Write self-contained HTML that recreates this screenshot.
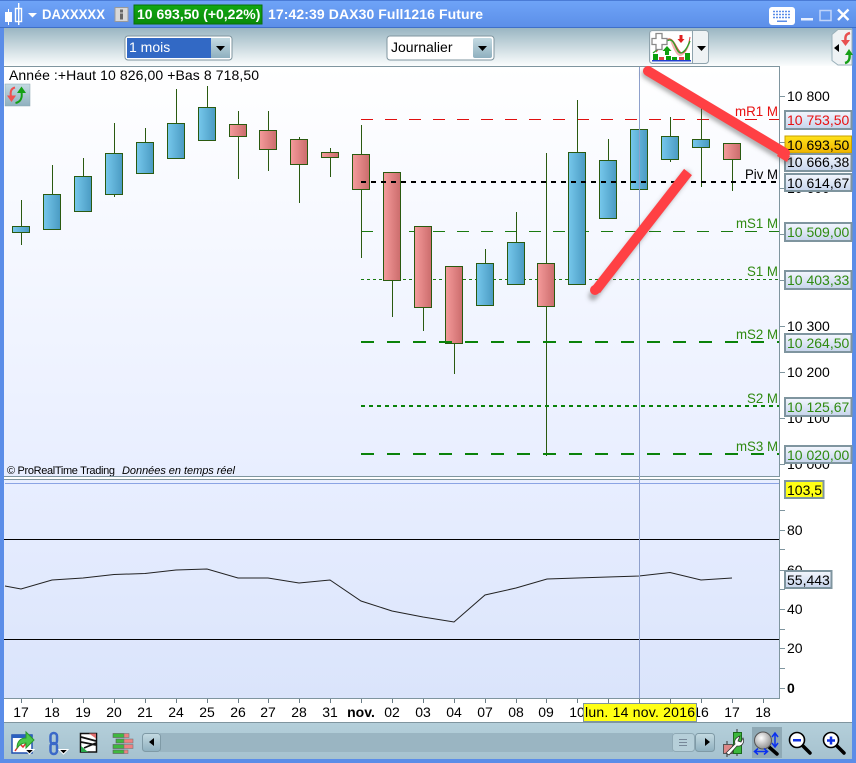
<!DOCTYPE html>
<html><head><meta charset="utf-8"><style>
html,body{margin:0;padding:0;background:#fff;width:856px;height:763px;overflow:hidden}
svg{display:block}
text{font-family:"Liberation Sans",sans-serif;font-size:14px;white-space:pre}
.b{fill:#000}.w{fill:#fff;font-weight:bold}
.c{stroke:#2a5a10;stroke-width:1;shape-rendering:crispEdges}
.l{fill:url(#lab);stroke:#7f959f;stroke-width:2}
.g{fill:#2f8a10}
</style></head><body>
<svg width="856" height="763" viewBox="0 0 856 763" xmlns="http://www.w3.org/2000/svg">
<defs>
<linearGradient id="tb" x1="0" y1="0" x2="0" y2="1"><stop offset="0" stop-color="#6fa4f8"/><stop offset="1" stop-color="#5c8fe8"/></linearGradient>
<linearGradient id="tool" x1="0" y1="0" x2="0" y2="1"><stop offset="0" stop-color="#9ab6c2"/><stop offset="1" stop-color="#fbfdfd"/></linearGradient>
<linearGradient id="bot" x1="0" y1="0" x2="0" y2="1"><stop offset="0" stop-color="#b4cfda"/><stop offset="1" stop-color="#a6c2cf"/></linearGradient>
<linearGradient id="main" x1="0" y1="0" x2="0" y2="1"><stop offset="0" stop-color="#fff"/><stop offset="1" stop-color="#e8eeff"/></linearGradient>
<linearGradient id="pane" x1="0" y1="0" x2="0" y2="1"><stop offset="0" stop-color="#e8eeff"/><stop offset="1" stop-color="#dae4fb"/></linearGradient>
<linearGradient id="up" x1="0" y1="0" x2="1" y2="0"><stop offset="0" stop-color="#76c8ec"/><stop offset="1" stop-color="#4a9ac2"/></linearGradient>
<linearGradient id="dn" x1="0" y1="0" x2="1" y2="0"><stop offset="0" stop-color="#f59b9b"/><stop offset="1" stop-color="#cb6c6c"/></linearGradient>
<linearGradient id="lab" x1="0" y1="0" x2="0" y2="1"><stop offset="0" stop-color="#f4f7fe"/><stop offset="1" stop-color="#c6d4ec"/></linearGradient>
<linearGradient id="btn" x1="0" y1="0" x2="0" y2="1"><stop offset="0" stop-color="#c4dae2"/><stop offset="1" stop-color="#8fb0bf"/></linearGradient>
<linearGradient id="gold" x1="0" y1="0" x2="0" y2="1"><stop offset="0" stop-color="#ffe21a"/><stop offset="1" stop-color="#f0b400"/></linearGradient>
<linearGradient id="grn" x1="0" y1="0" x2="0" y2="1"><stop offset="0" stop-color="#12a812"/><stop offset="1" stop-color="#0a8a0a"/></linearGradient>
<radialGradient id="lens" cx=".4" cy=".35" r=".7"><stop offset="0" stop-color="#fff"/><stop offset="1" stop-color="#8a8a8a"/></radialGradient>
<filter id="sh" x="-20%" y="-20%" width="140%" height="140%"><feGaussianBlur stdDeviation="2"/></filter>
</defs>

<!-- window frame -->
<rect width="856" height="763" fill="#5b8de8"/>
<rect width="856" height="27" fill="url(#tb)"/>
<rect y="0" width="856" height="1" fill="#4a7bd6"/>
<rect y="27" width="856" height="1" fill="#3f70c8"/>
<rect x="4" y="28" width="848" height="38" fill="url(#tool)"/>
<rect x="4" y="66" width="848" height="656" fill="#fff"/>
<rect x="4" y="723" width="848" height="36" fill="url(#bot)"/>
<rect x="4" y="722" width="848" height="1" fill="#7f959f"/>

<!-- title bar -->
<g fill="#fff">
<rect x="5" y="12" width="7" height="10"/><rect x="8" y="9" width="1" height="16"/>
<rect x="15.500" y="8.500" width="6" height="13" fill="none" stroke="#fff" stroke-width="1.400"/><rect x="18" y="3" width="1.400" height="22"/>
<path d="M28 13h9l-4.500 4.500z"/>
</g>
<text x="42" y="19" class="w" textLength="63" lengthAdjust="spacingAndGlyphs">DAXXXXX</text>
<rect x="115" y="7.500" width="13" height="14" fill="#d8d8d8" stroke="#9a9a9a"/>
<rect x="120" y="9.500" width="3" height="3" fill="#666"/><rect x="120" y="13.500" width="3" height="6" fill="#666"/>
<rect x="134" y="5" width="128" height="19" fill="url(#grn)" stroke="#0a6f0a"/>
<text x="137" y="19" class="w">10 693,50 (+0,22%)</text>
<text x="268" y="19" class="w" textLength="215">17:42:39 DAX30 Full1216 Future</text>
<rect x="769" y="7" width="26" height="18" rx="3" fill="#fff"/>
<g stroke="#5b8de8" stroke-width="1.500" stroke-dasharray="2 1" fill="none"><path d="M773 11.500h18M773 14.500h18M773 17.500h18"/></g>
<rect x="777" y="20.500" width="10" height="1.500" fill="#5b8de8"/>
<g stroke="#fff" fill="none">
<rect x="801" y="18" width="12" height="2.500" fill="#e8f0ff" stroke="none"/>
<rect x="820" y="10.500" width="11" height="10" stroke="#c0d4fa" stroke-width="1.500"/>
<path d="M838 9.500l10.500 10.500M848.500 9.500l-10.500 10.500" stroke-width="2.400"/>
</g>

<!-- dropdowns -->
<rect x="125" y="36" width="107" height="24" rx="3" fill="#fff" stroke="#7f959f"/>
<rect x="127" y="38" width="84" height="20" fill="#3269c5"/>
<text x="129" y="52" fill="#fff">1 mois</text>
<rect x="211" y="38" width="19" height="20" fill="url(#btn)"/>
<path d="M216 46h9l-4.500 5z"/>
<rect x="387" y="36" width="107" height="24" rx="3" fill="#fff" stroke="#7f959f"/>
<text x="391" y="52" fill="#000">Journalier</text>
<rect x="473" y="38" width="19" height="20" rx="2" fill="url(#btn)"/>
<path d="M478 46h9l-4.500 5z"/>

<!-- indicators button -->
<rect x="649.500" y="30.500" width="59" height="33" rx="3" fill="#eef2f4" stroke="#8fa3ad"/>
<rect x="651" y="32" width="41" height="30" rx="2" fill="#fff"/>
<line x1="692.500" y1="31" x2="692.500" y2="63" stroke="#8fa3ad"/>
<path d="M697 46h9l-4.500 5z"/>
<path d="M670 40C676 41 678 54 682 53C686 52 689 44 690 37V43C688 50 684 56 680 56C676 56 672 46 670 40z" fill="#f2b0b0"/>
<path d="M656 52C660 48 666 38 670 39C675 40 678 53 682 53C686 53 689 44 690 37" fill="none" stroke="#d84848" stroke-width="1"/>
<path d="M653 53C660 48 665 40 670 40C675 40 676 53 681 53C685 52 688 46 690 41" fill="none" stroke="#28a428" stroke-width="1.300"/>
<path d="M656 33.500h6v5h5v6h-5v5h-6v-5h-4v-6h4z" fill="#fff" stroke="#8a8a8a" stroke-width="1.300"/>
<path d="M665 55v-4h-2.500l4.500-5l4.500 5h-2.500v4z" fill="#12a012"/>
<path d="M679.500 35h3v4h2l-3.500 4l-3.500-4h2z" fill="#e02020"/>
<g fill="#0ca00c"><rect x="653" y="54" width="5" height="6"/><rect x="666" y="56" width="5" height="4"/><rect x="672" y="57" width="5" height="3"/><rect x="685" y="53" width="5" height="7"/></g>
<g fill="#e04848"><rect x="659" y="57" width="5" height="3"/><rect x="679" y="57" width="5" height="3"/></g>
<rect x="652" y="60" width="39" height="1.500" fill="#2040d0"/>

<!-- side icon -->
<path d="M852 29.500h-14l-6 5v26l6 4.500h14z" fill="#eef2f4" stroke="#9ab0ba"/>
<path d="M834 48l5-4v8z"/>
<path d="M850 33c-4 1-5 3-4.500 8" fill="none" stroke="#e85050" stroke-width="2.500"/>
<path d="M841 40h9l-4.500 6z" fill="#e85050"/>
<path d="M845 63c4-1 5-4 4.500-9" fill="none" stroke="#18a018" stroke-width="2.500"/>
<path d="M845 55h8l-4-6z" fill="#18a018"/>

<!-- main chart -->
<rect x="4" y="66" width="775" height="410" fill="url(#main)"/>
<text x="9" y="80" fill="#000" textLength="250">Année :+Haut 10 826,00 +Bas 8 718,50</text>
<rect x="5" y="84" width="25" height="22" fill="url(#btn)" stroke="#8aa4b0" stroke-width=".5"/>
<path d="M15 87.500c-4 1-5 4-4 9" fill="none" stroke="#f05050" stroke-width="2"/>
<path d="M7 95.500h9l-4.500 6.500z" fill="#f05050"/>
<path d="M21.500 92c1 6-1 10-6 11" fill="none" stroke="#14a014" stroke-width="2"/>
<path d="M17 93h9l-4.500-6.500z" fill="#14a014"/>

<!-- level lines -->
<g fill="none">
<line x1="361" y1="119.500" x2="779" y2="119.500" stroke="#e01010" stroke-dasharray="12 12"/>
<line x1="361" y1="231.500" x2="779" y2="231.500" stroke="#1a7a10" stroke-dasharray="12 12"/>
<line x1="361" y1="279.500" x2="779" y2="279.500" stroke="#1a7a10" stroke-dasharray="3 3"/>
</g>

<!-- wicks -->
<g class="c">
<path d="M21.500 200V245M52.500 165V194M83.500 158V176M114.500 123V197M145.500 128V142M176.500 89V123M207.500 86V107M238.500 111V179M268.500 111V171M299.500 137V203M330.500 148V177M361.500 125V258M392.500 172V317M423.500 226V331M454.500 266V374M485.500 249V263M516.500 212V242M546.500 153V456M577.500 100V152M608.500 139V160M639.500 98V129M670.500 117V162M701.500 108V187M732.500 143V191"/>
</g>
<!-- bodies -->
<g class="c" fill="url(#up)">
<rect x="12.500" y="226.500" width="17" height="6"/>
<rect x="43.500" y="194.500" width="17" height="35"/>
<rect x="74.500" y="176.500" width="17" height="35"/>
<rect x="105.500" y="153.500" width="17" height="41"/>
<rect x="136.500" y="142.500" width="17" height="31"/>
<rect x="167.500" y="123.500" width="17" height="35"/>
<rect x="198.500" y="107.500" width="17" height="33"/>
<rect x="476.500" y="263.500" width="17" height="42"/>
<rect x="507.500" y="242.500" width="17" height="42"/>
<rect x="568.500" y="152.500" width="17" height="132"/>
<rect x="599.500" y="160.500" width="17" height="58"/>
<rect x="630.500" y="129.500" width="17" height="60"/>
<rect x="661.500" y="136.500" width="17" height="23"/>
<rect x="692.500" y="139.500" width="17" height="8"/>
</g>
<g class="c" fill="url(#dn)">
<rect x="229.500" y="124.500" width="17" height="12"/>
<rect x="259.500" y="130.500" width="17" height="19"/>
<rect x="290.500" y="139.500" width="17" height="25"/>
<rect x="321.500" y="152.500" width="17" height="5"/>
<rect x="352.500" y="154.500" width="17" height="35"/>
<rect x="383.500" y="172.500" width="17" height="108"/>
<rect x="414.500" y="226.500" width="17" height="81"/>
<rect x="445.500" y="266.500" width="17" height="77"/>
<rect x="537.500" y="263.500" width="17" height="43"/>
<rect x="723.500" y="143.500" width="17" height="16"/>
</g>

<!-- thick levels on top -->
<g fill="none">
<line x1="361" y1="182" x2="779" y2="182" stroke="#000" stroke-width="2" stroke-dasharray="5 5"/>
<line x1="361" y1="342" x2="779" y2="342" stroke="#0a820a" stroke-width="2" stroke-dasharray="13 13"/>
<line x1="361" y1="406" x2="779" y2="406" stroke="#0a820a" stroke-width="2" stroke-dasharray="4 4"/>
<line x1="361" y1="454" x2="779" y2="454" stroke="#0a820a" stroke-width="2" stroke-dasharray="13 13"/>
</g>
<text x="735" y="116" fill="#e81010" textLength="43" lengthAdjust="spacingAndGlyphs">mR1 M</text>
<text x="745" y="179" fill="#000" textLength="33" lengthAdjust="spacingAndGlyphs">Piv M</text>
<text x="736" y="228" class="g" textLength="42" lengthAdjust="spacingAndGlyphs">mS1 M</text>
<text x="747" y="276" class="g" textLength="31" lengthAdjust="spacingAndGlyphs">S1 M</text>
<text x="736" y="339" class="g" textLength="42" lengthAdjust="spacingAndGlyphs">mS2 M</text>
<text x="747" y="403" class="g" textLength="31" lengthAdjust="spacingAndGlyphs">S2 M</text>
<text x="736" y="451" class="g" textLength="42" lengthAdjust="spacingAndGlyphs">mS3 M</text>
<text x="7" y="474" style="font-size:11px" fill="#000" textLength="108">© ProRealTime Trading</text>
<text x="122" y="474" style="font-size:11px;font-style:italic" fill="#000" textLength="113">Données en temps réel</text>

<!-- lower pane -->
<rect x="4" y="480" width="775" height="218" fill="url(#pane)"/>
<rect x="4" y="476" width="775" height="1" fill="#7f959f"/>
<rect x="4" y="479" width="775" height="1" fill="#7f959f"/>
<rect x="5" y="483" width="774" height="1" fill="#8ba4e4"/>
<rect x="4" y="539" width="775" height="1" fill="#000"/>
<rect x="4" y="639" width="775" height="1" fill="#000"/>
<polyline fill="none" stroke="#222" stroke-width="1" points="5,586 21,589 52,580 83,578 114,574.500 145,573.500 176,570 207,569 238,578 268,578 299,583 330,580 361,601 392,611 423,617 454,622 485,595 516,588 547,579 577,578 608,577 639,576 670,572.500 701,580 732,578"/>

<!-- crosshair -->
<line x1="639.500" y1="66" x2="639.500" y2="698" stroke="#8ea0cc"/>

<!-- axis frame -->
<g fill="#7f959f">
<rect x="4" y="66" width="775" height="1"/>
<rect x="779" y="66" width="1" height="411"/>
<rect x="779" y="479" width="1" height="220"/>
<rect x="4" y="698" width="775" height="1"/>
</g>

<!-- price axis ticks & labels -->
<g stroke="#7f959f" shape-rendering="crispEdges">
<path d="M780 96.500h5M780 142.500h5M780 188.500h5M780 234.500h5M780 280.500h5M780 326.500h5M780 372.500h5M780 418.500h5M780 464.500h5M780 510.500h5M780 530.500h5M780 549.500h5M780 570.500h5M780 589.500h5M780 609.500h5M780 629.500h5M780 648.500h5M780 668.500h5M780 688.500h5"/>
</g>
<text x="787" y="101" fill="#000">10 800</text>
<text x="787" y="193" fill="#000">10 600</text>
<text x="787" y="331" fill="#000">10 300</text>
<text x="787" y="377" fill="#000">10 200</text>
<text x="787" y="423" fill="#000">10 100</text>
<text x="787" y="469" fill="#000">10 000</text>
<text x="787" y="535" fill="#000">80</text>
<text x="787" y="575" fill="#000">60</text>
<text x="787" y="614" fill="#000">40</text>
<text x="787" y="653" fill="#000">20</text>
<text x="787" y="693" fill="#000" style="font-weight:bold">0</text>

<rect class="l" x="785" y="111" width="66.500" height="18"/><text x="787" y="125" fill="#e81010">10 753,50</text>
<rect x="785" y="136" width="66.500" height="17" fill="url(#gold)" stroke="#c8a000" stroke-width="1"/><text x="787" y="150" fill="#000">10 693,50</text>
<rect class="l" x="785" y="154" width="66.500" height="17"/><text x="787" y="167" fill="#000">10 666,38</text>
<rect class="l" x="785" y="174" width="66.500" height="17"/><text x="787" y="188" fill="#000">10 614,67</text>
<rect class="l" x="785" y="223" width="66.500" height="18"/><text x="787" y="237" class="g">10 509,00</text>
<rect class="l" x="785" y="271" width="66.500" height="18"/><text x="787" y="285" class="g">10 403,33</text>
<rect class="l" x="785" y="334" width="66.500" height="18"/><text x="787" y="348" class="g">10 264,50</text>
<rect class="l" x="785" y="398" width="66.500" height="18"/><text x="787" y="412" class="g">10 125,67</text>
<rect class="l" x="785" y="446" width="66.500" height="17"/><text x="787" y="460" class="g">10 020,00</text>
<rect x="785" y="481" width="38.500" height="17" fill="#ffff14" stroke="#7f959f" stroke-width="2"/><text x="787" y="495" fill="#000">103,5</text>
<rect class="l" x="785" y="571" width="46.500" height="17"/><text x="787" y="585" fill="#000">55,443</text>

<!-- red annotation lines -->
<g stroke-linecap="round" fill="none">
<path d="M646 74L788 160" stroke="#555" stroke-opacity=".45" stroke-width="9" filter="url(#sh)"/>
<path d="M593 296L686 175" stroke="#555" stroke-opacity=".45" stroke-width="9" filter="url(#sh)"/>
</g>
<path d="M648 71L785 153" stroke="#ff4044" stroke-width="10" stroke-linecap="round" fill="none"/>
<path d="M688 172L596 290" stroke="#ff4044" stroke-width="10" fill="none"/>
<circle cx="595" cy="290" r="5" fill="#ff4044"/>
<path d="M780 150L790 156L787 162L777 156z" fill="#ff4044"/>

<!-- date axis -->
<g stroke="#6a7c86" shape-rendering="crispEdges">
<path d="M21.500 699v4M52.500 699v4M83.500 699v4M114.500 699v4M145.500 699v4M176.500 699v4M207.500 699v4M238.500 699v4M268.500 699v4M299.500 699v4M330.500 699v4M361.500 699v4M392.500 699v4M423.500 699v4M454.500 699v4M485.500 699v4M516.500 699v4M546.500 699v4M577.500 699v4M608.500 699v4M639.500 699v4M670.500 699v4M701.500 699v4M732.500 699v4M763.500 699v4"/>
</g>
<g text-anchor="middle" fill="#000">
<text x="21" y="717">17</text><text x="52" y="717">18</text><text x="83" y="717">19</text><text x="114" y="717">20</text><text x="145" y="717">21</text><text x="176" y="717">24</text><text x="207" y="717">25</text><text x="238" y="717">26</text><text x="268" y="717">27</text><text x="299" y="717">28</text><text x="330" y="717">31</text>
<text x="361" y="717" style="font-weight:bold">nov.</text>
<text x="392" y="717">02</text><text x="423" y="717">03</text><text x="454" y="717">04</text><text x="485" y="717">07</text><text x="516" y="717">08</text><text x="546" y="717">09</text><text x="577" y="717">10</text><text x="701" y="717">16</text><text x="732" y="717">17</text><text x="763" y="717">18</text>
</g>
<rect x="583.500" y="703.500" width="113" height="18" fill="#ffff14" stroke="#7f959f"/>
<text x="585" y="717" fill="#000" textLength="110">lun. 14 nov. 2016</text>

<!-- bottom toolbar icons -->
<rect x="12" y="735" width="20" height="18" fill="#fff" stroke="#2050b0" stroke-width="1.500"/>
<rect x="12" y="735" width="20" height="3" fill="#2a60c0"/>
<path d="M15 751l5-7l3 3l5-6" fill="none" stroke="#e03030" stroke-width="1.500"/>
<path d="M17 748c0-7 4-10 9-10v-6l8 8l-8 8v-5c-4 0-7 2-9 5z" fill="#4cc84c" stroke="#2a9a2a"/>
<path d="M25 749.500h9l-4.500 4.500z" fill="#000" stroke="#fff"/>
<g fill="none" stroke="#3a68c8" stroke-width="2.500">
<rect x="50.500" y="733" width="6.500" height="11" rx="3.200"/>
<rect x="50.500" y="743" width="6.500" height="11" rx="3.200"/>
</g>
<path d="M59 749.500h9l-4.500 4.500z" fill="#000" stroke="#fff"/>
<rect x="80.500" y="733.500" width="16" height="18.500" fill="#fff" stroke="#111" stroke-width="1.500"/>
<path d="M81 737l15 4M81 742l15 3M84 748l12-5" stroke="#111" stroke-width="1.700" fill="none"/>
<path d="M89 733.500h7v5z" fill="#e07070"/><path d="M81 752v-6l7 6z" fill="#2aa84a"/>
<g fill="#3fb83f" stroke="#5a5a5a" stroke-width=".6">
<rect x="113" y="733.500" width="11" height="4"/><rect x="116" y="739" width="8" height="4"/><rect x="113" y="744.500" width="11" height="4"/><rect x="113" y="750" width="11" height="3.500"/>
</g>
<g fill="#ee8080" stroke="#777" stroke-width=".6">
<rect x="124" y="733.500" width="5" height="4"/><rect x="124" y="739" width="9" height="4"/><rect x="124" y="744.500" width="9" height="4"/><rect x="124" y="750" width="4" height="3.500"/>
</g>

<!-- scrollbar -->
<rect x="160" y="733" width="513" height="19" fill="#9ab5c2"/>
<rect x="142.500" y="733.500" width="18" height="18" rx="3" fill="url(#btn)" stroke="#7f9aa6"/>
<path d="M154 738v8l-5-4z"/>
<rect x="672.500" y="733.500" width="22" height="18" rx="3" fill="#b6cfd9" stroke="#8fa9b5"/>
<path d="M679 739.500h8M679 742.500h8M679 745.500h8" stroke="#789" stroke-width="1"/>
<rect x="695.500" y="733.500" width="19" height="18" rx="3" fill="url(#btn)" stroke="#7f9aa6"/>
<path d="M705 738v8l5-4z"/>

<!-- wrench candles -->
<path d="M737 729v4M737 752v4M727 741v4M727 753v4" stroke="#333"/>
<rect x="723.500" y="744.500" width="9" height="9" fill="#dd8888" stroke="#555"/>
<rect x="733.500" y="732.500" width="8" height="21" fill="#3cb83c" stroke="#1a6a1a"/>
<path d="M726 753l9-9c-1-3 0-6 5-8l-2 5l3 1l2-4c2 4-1 9-6 8l-8 9z" fill="#fff" stroke="#333" stroke-width=".8"/>

<!-- magnifiers -->
<rect x="752" y="727" width="30" height="31" fill="#8fa9b5"/>
<g>
<path d="M769 747l8 7" stroke="#000" stroke-width="3.500" stroke-linecap="round"/>
<circle cx="763" cy="740.500" r="8.500" fill="url(#lens)" stroke="#555"/>
<path d="M775 734v12M772 737l3-4l3 4M772 743l3 4l3-4M755 751.500h12M758 748.500l-3.500 3l3.500 3M764 748.500l3.500 3l-3.500 3" fill="none" stroke="#0a30f0" stroke-width="1.500"/>
</g>
<path d="M803 746l7 7" stroke="#000" stroke-width="3.500" stroke-linecap="round"/>
<circle cx="797" cy="740" r="7.500" fill="#fff" stroke="#000" stroke-width="1.600"/>
<rect x="793" y="739" width="8" height="2.500" fill="#1030e0"/>
<path d="M837 746l7 7" stroke="#000" stroke-width="3.500" stroke-linecap="round"/>
<circle cx="831" cy="740" r="7.500" fill="#fff" stroke="#000" stroke-width="1.600"/>
<path d="M827 740.500h8M831 736.500v8" stroke="#1030e0" stroke-width="2.500"/>
</svg>
</body></html>
